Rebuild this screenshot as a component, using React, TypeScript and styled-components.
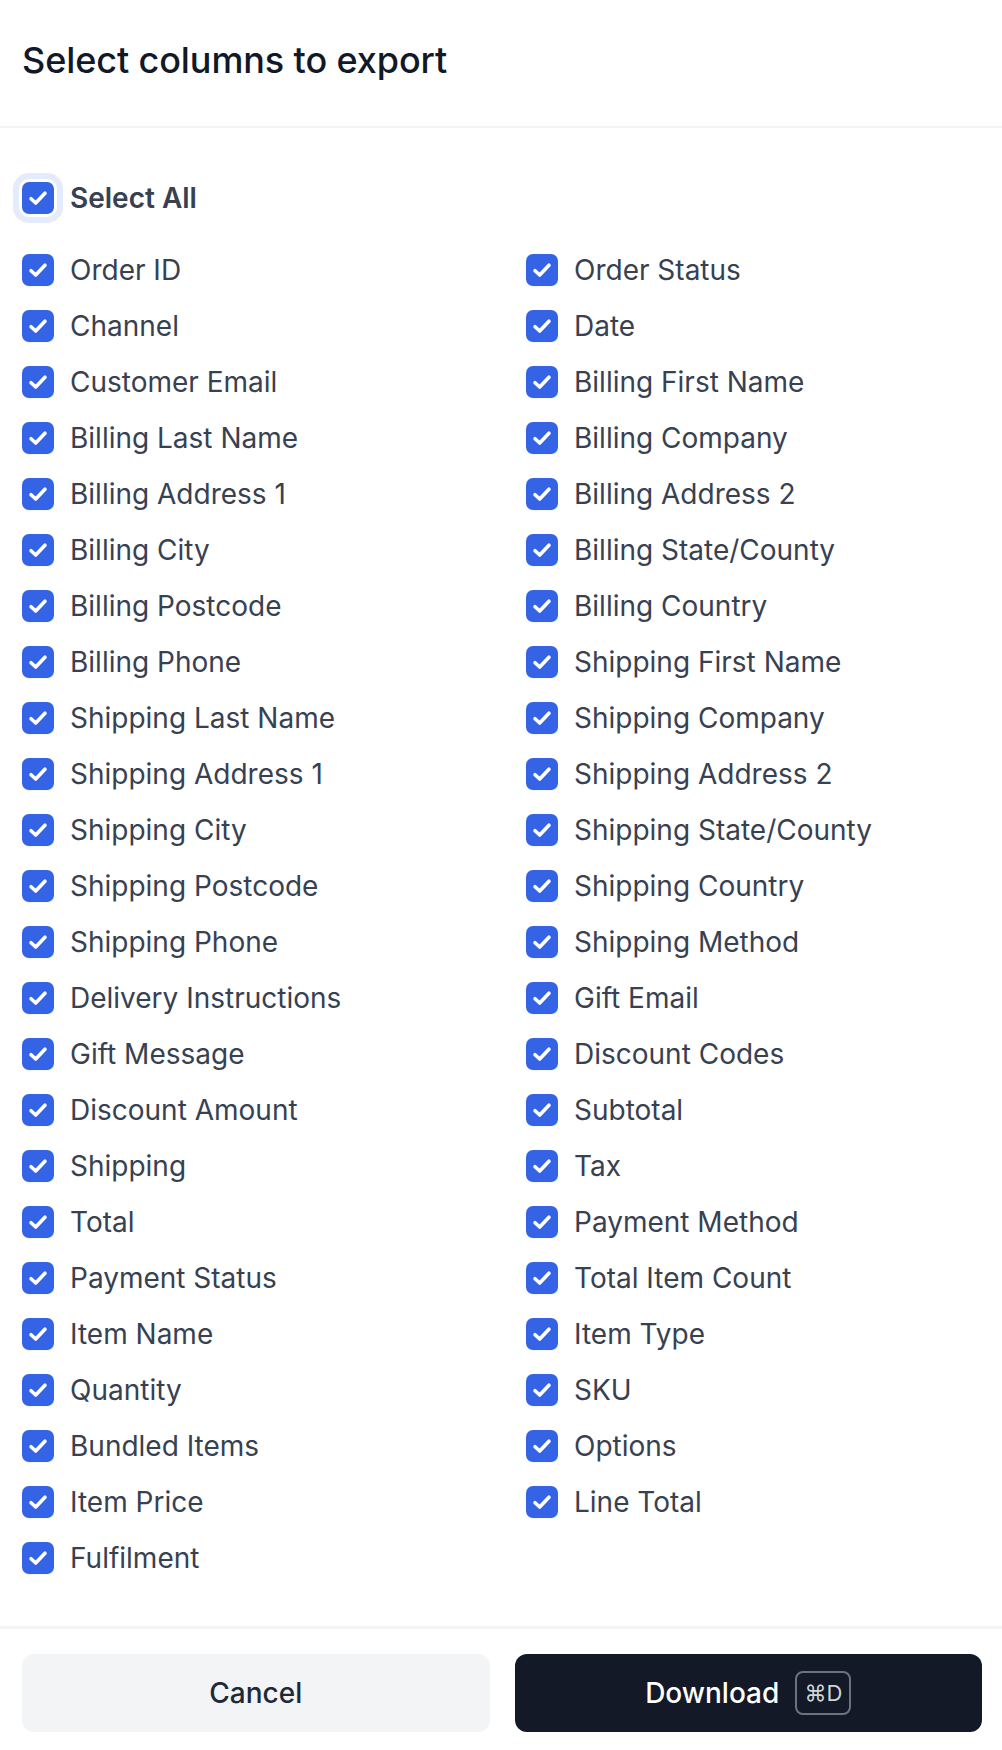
import React, { useState } from 'react';
import styled, { createGlobalStyle } from 'styled-components';

const GlobalStyle = createGlobalStyle`
  html, body {
    margin: 0;
    padding: 0;
    background: #ffffff;
  }
  body {
    font-family: Inter, "Noto Sans", "Liberation Sans", sans-serif;
    -webkit-font-smoothing: antialiased;
  }
  * { box-sizing: border-box; }
`;

const Dialog = styled.div`
  width: 1002px;
  background: #ffffff;
  display: flex;
  flex-direction: column;
`;

const Header = styled.header`
  height: 128px;
  padding: 0 22px 7px;
  display: flex;
  align-items: center;
  border-bottom: 2px solid #f3f4f6;
`;

const Title = styled.h2`
  margin: 0;
  font-size: 36px;
  font-weight: 500;
  color: #111827;
  letter-spacing: -0.1px;
`;

const Body = styled.div`
  padding: 54px 22px 52px;
  display: flex;
  flex-direction: column;
  gap: 40px;
`;

const Grid = styled.div`
  display: grid;
  grid-template-columns: 1fr 1fr;
  column-gap: 50px;
  row-gap: 24px;
`;

const Row = styled.label<{ $bold?: boolean }>`
  display: flex;
  align-items: center;
  gap: 16px;
  height: 32px;
  cursor: pointer;
  font-size: 28px;
  font-weight: ${(p) => (p.$bold ? 600 : 400)};
  color: #374151;
  user-select: none;
`;

const Box = styled.span<{ $focus?: boolean; $checked: boolean }>`
  flex: none;
  width: 32px;
  height: 32px;
  border-radius: 7px;
  background: ${(p) => (p.$checked ? '#3563e6' : '#ffffff')};
  border: ${(p) => (p.$checked ? 'none' : '2px solid #d1d5db')};
  display: flex;
  align-items: center;
  justify-content: center;
  box-shadow: ${(p) =>
    p.$focus ? '0 0 0 3px #ffffff, 0 0 0 9px #e3ebfc' : '0 1px 2px rgba(0,0,0,0.05)'};
`;

const Footer = styled.footer`
  border-top: 3px solid #f3f4f6;
  padding: 25px 20px 18px 22px;
  display: grid;
  grid-template-columns: 1fr 1fr;
  gap: 25px;
`;

const Button = styled.button<{ $primary?: boolean }>`
  height: 78px;
  border: none;
  border-radius: 12px;
  font-family: inherit;
  font-size: 28px;
  font-weight: 500;
  display: flex;
  align-items: center;
  justify-content: center;
  gap: 16px;
  cursor: pointer;
  background: ${(p) => (p.$primary ? '#131927' : '#f3f4f6')};
  color: ${(p) => (p.$primary ? '#ffffff' : '#1f2937')};
`;

const Kbd = styled.kbd`
  font-family: inherit;
  font-size: 22px;
  font-weight: 400;
  color: #d1d5db;
  height: 44px;
  padding: 0 6px;
  min-width: 56px;
  border: 2px solid #6b7280;
  border-radius: 8px;
  display: inline-flex;
  align-items: center;
  justify-content: center;
`;

const COLUMNS = [
  'Order ID', 'Order Status',
  'Channel', 'Date',
  'Customer Email', 'Billing First Name',
  'Billing Last Name', 'Billing Company',
  'Billing Address 1', 'Billing Address 2',
  'Billing City', 'Billing State/County',
  'Billing Postcode', 'Billing Country',
  'Billing Phone', 'Shipping First Name',
  'Shipping Last Name', 'Shipping Company',
  'Shipping Address 1', 'Shipping Address 2',
  'Shipping City', 'Shipping State/County',
  'Shipping Postcode', 'Shipping Country',
  'Shipping Phone', 'Shipping Method',
  'Delivery Instructions', 'Gift Email',
  'Gift Message', 'Discount Codes',
  'Discount Amount', 'Subtotal',
  'Shipping', 'Tax',
  'Total', 'Payment Method',
  'Payment Status', 'Total Item Count',
  'Item Name', 'Item Type',
  'Quantity', 'SKU',
  'Bundled Items', 'Options',
  'Item Price', 'Line Total',
  'Fulfilment',
];

const Check = () => (
  <svg width="24" height="24" viewBox="0 0 20 20" fill="none">
    <path d="M4.2 10.6l3.9 3.6L15.8 6" stroke="#ffffff" strokeWidth="3" strokeLinecap="round" strokeLinejoin="round" />
  </svg>
);

export default function App() {
  const [selected, setSelected] = useState<Set<string>>(() => new Set(COLUMNS));
  const allOn = selected.size === COLUMNS.length;

  const toggle = (name: string) => {
    setSelected((prev) => {
      const next = new Set(prev);
      if (next.has(name)) next.delete(name);
      else next.add(name);
      return next;
    });
  };

  return (
    <>
      <GlobalStyle />
      <Dialog>
        <Header>
          <Title>Select columns to export</Title>
        </Header>
        <Body>
          <Row $bold onClick={() => setSelected(allOn ? new Set() : new Set(COLUMNS))}>
            <Box $focus $checked={allOn}>{allOn && <Check />}</Box>
            Select All
          </Row>
          <Grid>
            {COLUMNS.map((name) => (
              <Row key={name} onClick={() => toggle(name)}>
                <Box $checked={selected.has(name)}>{selected.has(name) && <Check />}</Box>
                {name}
              </Row>
            ))}
          </Grid>
        </Body>
        <Footer>
          <Button>Cancel</Button>
          <Button $primary>
            Download
            <Kbd>⌘D</Kbd>
          </Button>
        </Footer>
      </Dialog>
    </>
  );
}
